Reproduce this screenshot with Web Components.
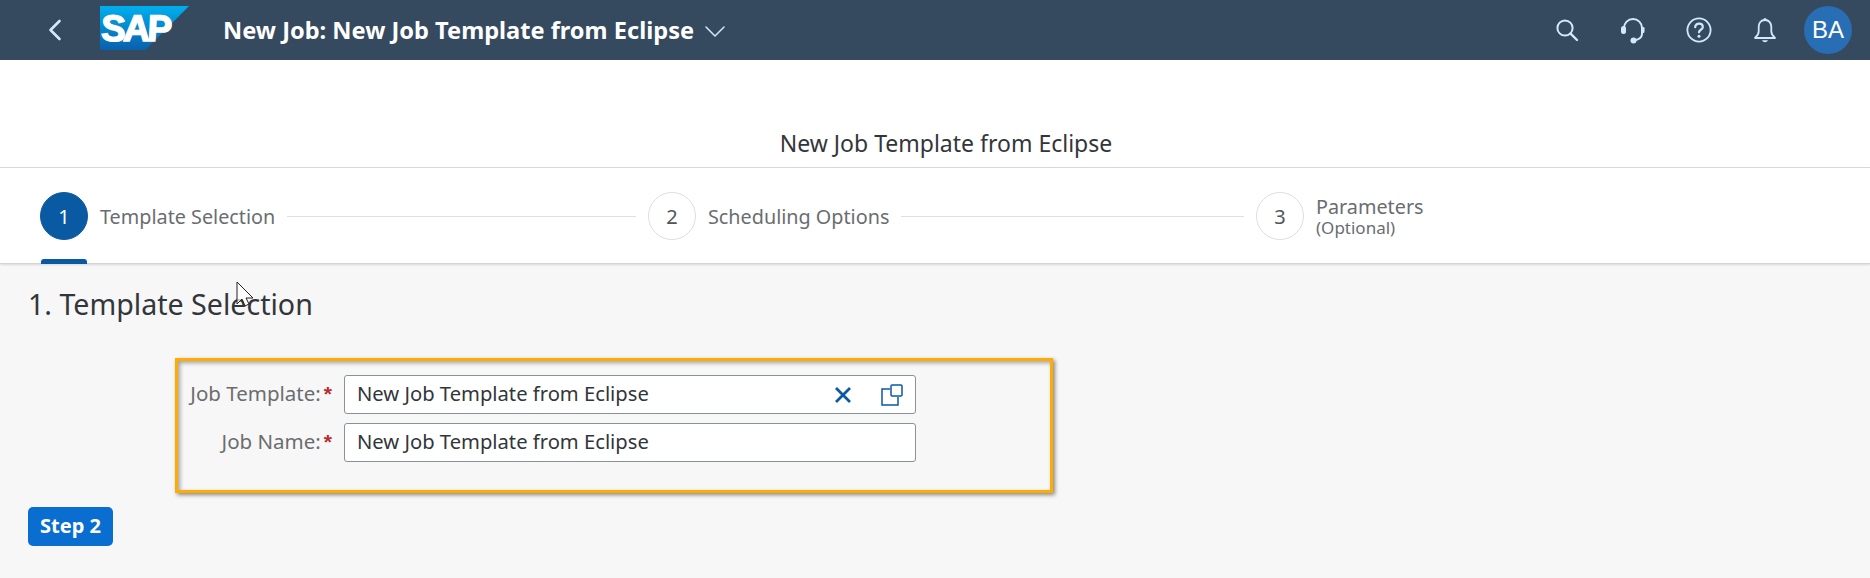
<!DOCTYPE html>
<html lang="en">
<head>
<meta charset="utf-8">
<title>New Job</title>
<style>
  html, body { margin: 0; padding: 0; height: 100%; overflow: hidden; background: #f7f7f7; }
  body { font-family: "Noto Sans", "Open Sans", sans-serif; color: #32363a; }
</style>
</head>
<body>
<job-app>
  <shell-bar heading="New Job: New Job Template from Eclipse" initials="BA"></shell-bar>
  <page-title>New Job Template from Eclipse</page-title>
  <job-wizard>
    <wizard-step number="1" active>Template Selection</wizard-step>
    <wizard-step number="2">Scheduling Options</wizard-step>
    <wizard-step number="3" note="(Optional)" last>Parameters</wizard-step>
  </job-wizard>
  <job-content>
    <h-section>1. Template Selection</h-section>
    <form-panel>
      <form-field label="Job Template:" value="New Job Template from Eclipse" icons></form-field>
      <form-field label="Job Name:" value="New Job Template from Eclipse"></form-field>
    </form-panel>
    <step-button>Step 2</step-button>
  </job-content>
  <mouse-cursor></mouse-cursor>
</job-app>

<script>
const icons = {
  back: `<svg width="16" height="22" viewBox="0 0 16 22" fill="none" stroke="#d1e8ff" stroke-width="2.6" stroke-linecap="round" stroke-linejoin="round"><path d="M12.5 2 3.5 11l9 9"/></svg>`,
  down: `<svg width="20" height="11" viewBox="0 0 20 11" fill="none" stroke="#d1e8ff" stroke-width="1.5" stroke-linecap="round" stroke-linejoin="round"><path d="M1 1l9 9 9-9"/></svg>`,
  search: `<svg width="24" height="24" viewBox="0 0 24 24" fill="none" stroke="#d1e8ff" stroke-width="2" stroke-linecap="round"><circle cx="10" cy="10" r="7.6"/><path d="M15.6 15.6 22 22" stroke-width="2.4"/></svg>`,
  headset: `<svg width="28" height="28" viewBox="0 0 28 28" fill="none" stroke="#d1e8ff" stroke-width="2" stroke-linecap="round"><path d="M5 12a9 9 0 0 1 18 0v6c0 3-2.500 5-6 6"/><rect x="2" y="10" width="5" height="8" rx="2.500" fill="#d1e8ff" stroke="none"/><rect x="23" y="11" width="2.500" height="6" rx="1.200" fill="#d1e8ff" stroke="none"/><circle cx="14.500" cy="24.500" r="3" fill="#d1e8ff" stroke="none"/></svg>`,
  help: `<svg width="26" height="26" viewBox="0 0 26 26" fill="none" stroke="#d1e8ff" stroke-width="1.800" stroke-linecap="round"><circle cx="13" cy="13" r="11.600"/><path d="M9.200 10.200c0-2.200 1.700-3.600 3.800-3.600s3.800 1.300 3.800 3.300c0 2.900-3.800 2.800-3.800 5.400" stroke-width="2.200"/><circle cx="13" cy="19.300" r="1.500" fill="#d1e8ff" stroke="none"/></svg>`,
  bell: `<svg width="24" height="26" viewBox="0 0 24 26" fill="none" stroke="#d1e8ff" stroke-width="1.800" stroke-linejoin="round"><path d="M12 3c-4.200 0-6.300 3.200-6.300 7v4.500c0 2.500-1.700 4.700-3.700 6.500h20c-2-1.800-3.700-4-3.700-6.500V10c0-3.800-2.100-7-6.300-7z"/><circle cx="12" cy="2.400" r="1.500" fill="#d1e8ff" stroke="none"/><path d="M9 23.300c.5 1.300 1.600 2 3 2s2.500-.7 3-2z" fill="#d1e8ff" stroke="none"/></svg>`,
  clear: `<svg width="18" height="18" viewBox="0 0 18 18" fill="none" stroke="#0a5aa3" stroke-width="2.800"><path d="M2 2l14 14M16 2 2 16"/></svg>`,
  copy: `<svg width="22" height="22" viewBox="0 0 22 22" fill="none" stroke="#0a5aa3" stroke-width="1.500"><path d="M9 5H1v16h16v-8"/><rect x="10" y="1" width="11" height="11" rx="1"/></svg>`
};

class JobApp extends HTMLElement {
  constructor() {
    super();
    this.attachShadow({ mode: "open" });
    this.shadowRoot.innerHTML = `
      <style>
        :host { display: flex; flex-direction: column; position: relative; height: 578px; overflow: hidden; }
      </style>
      <slot></slot>`;
  }
}

class ShellBar extends HTMLElement {
  constructor() {
    super();
    this.attachShadow({ mode: "open" });
  }
  connectedCallback() {
    this.shadowRoot.innerHTML = `
      <style>
        :host { display: flex; align-items: center; height: 60px; background: #354a5f; color: #fff; flex: none; }
        .back { display: flex; margin-left: 47px; width: 53px; }
        .logo { position: relative; width: 89px; height: 44px; margin-top: -4px; }
        .logo i { position: absolute; inset: 0; background: linear-gradient(#00b0ee, #0a5fac);
          clip-path: polygon(0 0, 100% 0, 51% 100%, 0 100%); }
        .logo b { position: relative; display: block; padding: 7px 0 0 3px; font: italic 700 37px/32px "Liberation Sans", sans-serif;
          letter-spacing: -2.600px; transform: skewX(8deg); transform-origin: 0 100%; color: #fff; -webkit-text-stroke: 1.500px #fff; }
        h1 { margin: 0 0 0 34px; font-size: 23.600px; font-weight: 700; line-height: 28px; white-space: nowrap; }
        .down { display: flex; margin: 2px 0 0 11px; }
        .tools { display: flex; align-items: center; margin-left: auto; }
        .tools span { display: flex; justify-content: center; width: 66px; }
        .avatar { display: flex; align-items: center; justify-content: center; width: 48px; height: 48px; margin: 0 18px 0 6px;
          border-radius: 50%; background: #286eb4; font: 24px "Liberation Sans", sans-serif; }
      </style>
      <span class="back">${icons.back}</span>
      <div class="logo"><i></i><b>SAP</b></div>
      <h1>${this.getAttribute("heading")}</h1>
      <span class="down">${icons.down}</span>
      <div class="tools">
        <span>${icons.search}</span><span>${icons.headset}</span><span>${icons.help}</span><span>${icons.bell}</span>
      </div>
      <div class="avatar">${this.getAttribute("initials")}</div>`;
  }
}

class PageTitle extends HTMLElement {
  constructor() {
    super();
    this.attachShadow({ mode: "open" });
    this.shadowRoot.innerHTML = `
      <style>
        :host { display: flex; justify-content: center; align-items: flex-end; box-sizing: border-box; height: 108px; padding: 0 0 10px 22px;
          background: #fff; border-bottom: 1px solid #d9d9d9; font-size: 23px; line-height: 28px; color: #32363a; flex: none; }
      </style>
      <slot></slot>`;
  }
}

class JobWizard extends HTMLElement {
  constructor() {
    super();
    this.attachShadow({ mode: "open" });
    this.shadowRoot.innerHTML = `
      <style>
        :host { display: flex; box-sizing: border-box; height: 96px; padding: 24px 0 0 40px; background: #fff; flex: none;
          border-bottom: 1px solid #d4d4d4; box-shadow: 0 1px 2px rgba(0,0,0,.12); position: relative; z-index: 1; }
      </style>
      <slot></slot>`;
  }
}

class WizardStep extends HTMLElement {
  constructor() {
    super();
    this.attachShadow({ mode: "open" });
  }
  connectedCallback() {
    const active = this.hasAttribute("active");
    const note = this.getAttribute("note");
    this.shadowRoot.innerHTML = `
      <style>
        :host { display: flex; align-items: flex-start; position: relative; width: 608px; height: 48px; font-size: 19.800px; color: #6a6d70; }
        .num { display: flex; align-items: center; justify-content: center; flex: none; box-sizing: border-box; width: 48px; height: 48px;
          border-radius: 50%; font-size: 20px;
          border: 1px solid ${active ? "#0a5aa3" : "#dedede"}; background: ${active ? "#0a5aa3" : "#fff"}; color: ${active ? "#fff" : "#515559"}; }
        .text { margin-left: 12px; box-sizing: border-box; height: 48px; padding-top: 2px; display: flex; flex-direction: column; justify-content: center; white-space: nowrap; line-height: 22px; }
        .text small { font-size: 17px; line-height: 20px; }
        .line { flex: 1; height: 1px; background: #e0e0e0; margin: 24px 12px 0 12px; }
        .mark { position: absolute; left: 1px; top: 67px; width: 46px; height: 5px; background: #0a5aa3; border-radius: 3px 3px 0 0; }
      </style>
      <span class="num">${this.getAttribute("number")}</span>
      <span class="text"><span><slot></slot></span>${note ? `<small>${note}</small>` : ""}</span>
      ${this.hasAttribute("last") ? "" : `<span class="line"></span>`}
      ${active ? `<span class="mark"></span>` : ""}`;
  }
}

class JobContent extends HTMLElement {
  constructor() {
    super();
    this.attachShadow({ mode: "open" });
    this.shadowRoot.innerHTML = `
      <style>
        :host { display: flex; flex-direction: column; align-items: flex-start; flex: 1; padding: 0 0 0 28px; background: #f7f7f7; }
      </style>
      <slot></slot>`;
  }
}

class HSection extends HTMLElement {
  constructor() {
    super();
    this.attachShadow({ mode: "open" });
    this.shadowRoot.innerHTML = `
      <style>
        :host { display: block; height: 94px; padding-top: 22px; box-sizing: border-box; font-size: 28.600px; line-height: 36px; color: #32363a; }
      </style>
      <slot></slot>`;
  }
}

class FormPanel extends HTMLElement {
  constructor() {
    super();
    this.attachShadow({ mode: "open" });
    this.shadowRoot.innerHTML = `
      <style>
        :host { display: flex; flex-direction: column; gap: 9px; box-sizing: border-box; width: 878px; height: 135px; margin-left: 147px;
          padding: 14px 0 0 0; border: 3px solid #ffab00;
          box-shadow: 2px 2px 4px rgba(0,0,0,.45), inset 2px 2px 4px rgba(0,0,0,.35); }
      </style>
      <slot></slot>`;
  }
}

class FormField extends HTMLElement {
  constructor() {
    super();
    this.attachShadow({ mode: "open" });
  }
  connectedCallback() {
    this.shadowRoot.innerHTML = `
      <style>
        :host { display: flex; align-items: center; height: 39px; font-size: 20.200px; }
        label { display: flex; justify-content: flex-end; width: 154px; margin-right: 12px; padding-bottom: 3px; font-size: 20.500px; color: #6a6d70; white-space: nowrap; }
        label b { color: #bb2b2b; font: 700 21px/24px "Liberation Sans", sans-serif; margin-left: 3px; padding-top: 3px; }
        .box { display: flex; align-items: center; box-sizing: border-box; width: 572px; height: 39px; padding: 0 12px; background: #fff;
          border: 1px solid #89919a; border-radius: 3px; color: #32363a; }
        .val { flex: 1; white-space: nowrap; padding-bottom: 3px; }
        .ic { display: flex; gap: 29px; align-items: center; }
        .ic span { display: flex; }
      </style>
      <label>${this.getAttribute("label")}<b>*</b></label>
      <div class="box"><span class="val">${this.getAttribute("value")}</span>
        ${this.hasAttribute("icons") ? `<span class="ic"><span>${icons.clear}</span><span>${icons.copy}</span></span>` : ""}
      </div>`;
  }
}

class StepButton extends HTMLElement {
  constructor() {
    super();
    this.attachShadow({ mode: "open" });
    this.shadowRoot.innerHTML = `
      <style>
        :host { display: flex; align-items: center; justify-content: center; box-sizing: border-box; width: 85px; height: 39px; margin-top: 14px; padding-bottom: 2px;
          background: #0a6ed1; border-radius: 5px; color: #fff; font-size: 20px; font-weight: 700; }
      </style>
      <slot></slot>`;
  }
}

class MouseCursor extends HTMLElement {
  constructor() {
    super();
    this.attachShadow({ mode: "open" });
    this.shadowRoot.innerHTML = `
      <style>
        :host { display: block; position: absolute; left: 236px; top: 281px; width: 20px; height: 30px; z-index: 3; }
      </style>
      <svg width="20" height="30" viewBox="0 0 20 30" fill="none" stroke="#222" stroke-width="1">
        <path d="M1 1v22l5-5 3 7 4-2-3-6h7z" fill="rgba(255,255,255,.75)"/>
      </svg>`;
  }
}

customElements.define("job-app", JobApp);
customElements.define("shell-bar", ShellBar);
customElements.define("page-title", PageTitle);
customElements.define("job-wizard", JobWizard);
customElements.define("wizard-step", WizardStep);
customElements.define("job-content", JobContent);
customElements.define("h-section", HSection);
customElements.define("form-panel", FormPanel);
customElements.define("form-field", FormField);
customElements.define("step-button", StepButton);
customElements.define("mouse-cursor", MouseCursor);
</script>
</body>
</html>
